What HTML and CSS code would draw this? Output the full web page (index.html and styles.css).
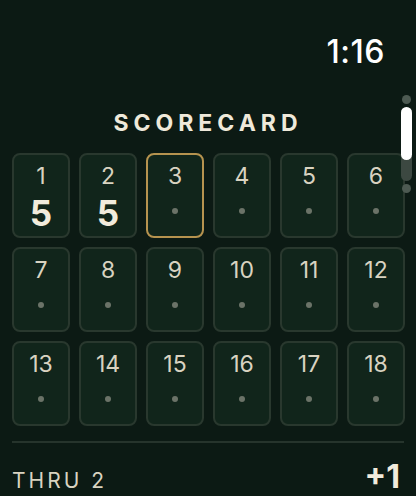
FILE: index.html
```html
<!DOCTYPE html>
<html lang="en">
<head>
	<meta charset="UTF-8">
	<meta name="viewport" content="width=device-width, initial-scale=1.0">
	<title>Scorecard</title>
	<link rel="stylesheet" href="styles.css">
</head>
<body>
	<div class="screen">
		<div class="status">
			<span class="time">1:16</span>
		</div>
		<h1 class="title">SCORECARD</h1>
		<div class="grid">
			<div class="hole"><span class="num">1</span><span class="score">5</span></div>
			<div class="hole"><span class="num">2</span><span class="score">5</span></div>
			<div class="hole current"><span class="num">3</span><span class="dot"></span></div>
			<div class="hole"><span class="num">4</span><span class="dot"></span></div>
			<div class="hole"><span class="num">5</span><span class="dot"></span></div>
			<div class="hole"><span class="num">6</span><span class="dot"></span></div>
			<div class="hole"><span class="num">7</span><span class="dot"></span></div>
			<div class="hole"><span class="num">8</span><span class="dot"></span></div>
			<div class="hole"><span class="num">9</span><span class="dot"></span></div>
			<div class="hole"><span class="num">10</span><span class="dot"></span></div>
			<div class="hole"><span class="num">11</span><span class="dot"></span></div>
			<div class="hole"><span class="num">12</span><span class="dot"></span></div>
			<div class="hole"><span class="num">13</span><span class="dot"></span></div>
			<div class="hole"><span class="num">14</span><span class="dot"></span></div>
			<div class="hole"><span class="num">15</span><span class="dot"></span></div>
			<div class="hole"><span class="num">16</span><span class="dot"></span></div>
			<div class="hole"><span class="num">17</span><span class="dot"></span></div>
			<div class="hole"><span class="num">18</span><span class="dot"></span></div>
		</div>
		<hr class="divider">
		<div class="total">
			<span class="thru">THRU 2</span>
			<span class="over">+1</span>
		</div>
		<!-- scroll indicator sits over the right edge -->
		<div class="scroller">
			<span class="sdot"></span>
			<span class="track"><span class="thumb"></span></span>
			<span class="sdot"></span>
		</div>
	</div>
</body>
</html>
```

FILE: styles.css
```css
html, body{ margin: 0; padding: 0; }
body{
	background: #0c1a14;
	font-family: Inter, "Noto Sans", sans-serif;
	color: #e9e3d3;
}
.screen{
	position: relative;
	width: 416px; height: 496px; overflow: hidden;
}
.status{
	display: flex; justify-content: flex-end;
	height: 40px; padding: 33px 31px 0 0;
}
.time{
	font-size: 32px; line-height: 38px; color: #fff;
	font-weight: 500; letter-spacing: 0.5px;
}
.title{
	margin: 0; padding: 36px 0 0 0;
	text-align: center; font-size: 23px; line-height: 28px;
	font-weight: 700; letter-spacing: 5px; color: #efe9da;
}
.grid{
	display: grid; grid-template-columns: repeat(6, 58px);
	gap: 9px; margin: 16px 0 0 12px;
}
.hole{
	box-sizing: border-box; height: 85px;
	border: 2px solid #29382e; border-radius: 8px;
	background: #11251b;
	display: flex; flex-direction: column; align-items: center;
	padding-top: 7px;
}
.hole.current{ border-color: #b6934f; }
.num{
	font-size: 23px; line-height: 28px; color: #d9d3c1;
}
.score{
	font-size: 35px; line-height: 36px; font-weight: 700; color: #f1ebdc;
	margin-top: 5px;
}
.dot{
	width: 6px; height: 6px; border-radius: 50%;
	background: #6b7368; margin-top: 18px;
}
.divider{
	border: 0; border-top: 2px solid #26342c;
	margin: 15px 12px 0 12px;
}
.total{
	display: flex; justify-content: space-between; align-items: flex-end;
	padding: 17px 16px 0 12px;
}
.thru{
	font-size: 21px; line-height: 26px; letter-spacing: 3px; color: #d9d3c1;
}
.over{
	font-size: 32px; line-height: 34px; font-weight: 700; color: #f1ebdc;
}
.scroller{
	position: absolute; left: 400px; top: 95px; width: 12px;
	display: flex; flex-direction: column; align-items: center; gap: 3px;
}
.sdot{
	width: 9px; height: 9px; border-radius: 50%; background: #4d5a52;
}
.track{
	width: 11px; height: 74px; border-radius: 6px; background: #3c4841;
	display: flex; flex-direction: column;
}
.thumb{
	width: 11px; height: 53px; border-radius: 6px; background: #fff;
}
```
